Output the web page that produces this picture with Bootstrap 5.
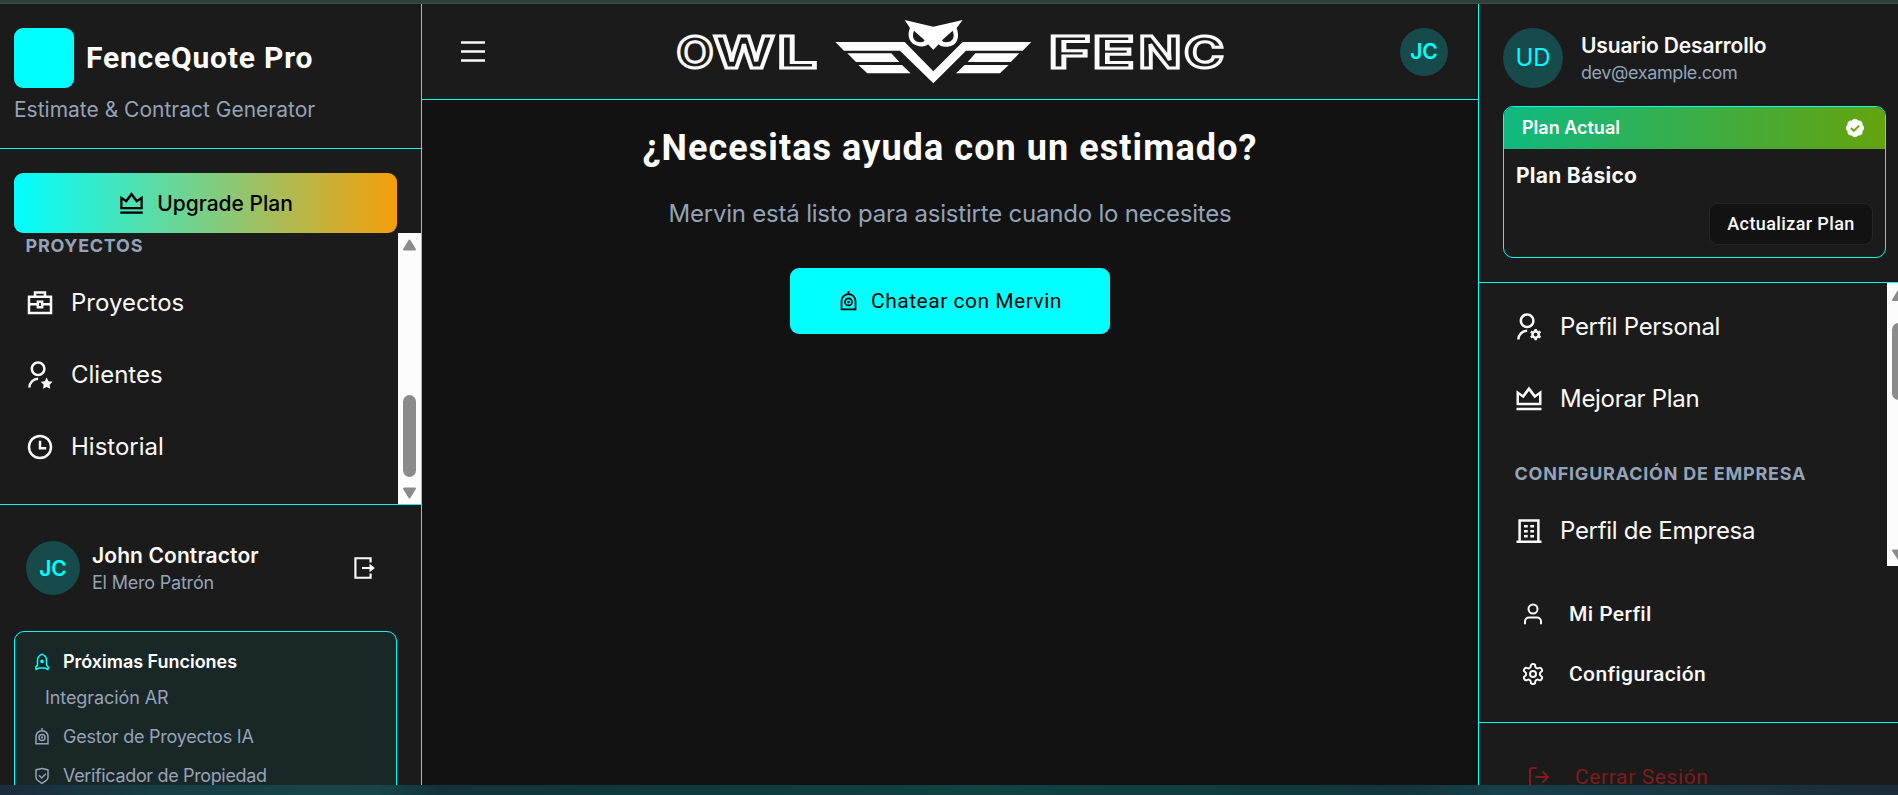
<!DOCTYPE html>
<html lang="es" data-bs-theme="dark">
<head>
<meta charset="utf-8">
<meta name="viewport" content="width=device-width, initial-scale=1">
<title>FenceQuote Pro</title>
<link href="https://cdn.jsdelivr.net/npm/bootstrap@5.3.0/dist/css/bootstrap.min.css" rel="stylesheet">
<style>
:root{--cyan:#00ffff;--panel:#1b1b1b;--muted:#94a3b8;--ink:#fafafa}
body{height:795px;overflow:hidden;background:#121212;color:var(--ink);font-family:Inter,"Noto Sans",sans-serif;font-size:24px;line-height:1}
.tech{font-family:Roboto,"Noto Sans",sans-serif}
svg{flex:none;display:block}
.strip-top{height:4px;background:#2c423b;border-bottom:1.5px solid #414b46}
.strip-bottom{height:10px;background:linear-gradient(90deg,#1a2c3e 0,#163e46 8%,#17454b 20%,#12333d 23%,#0f3e40 45%,#0f4342 52%,#12353f 74%,#17404a 79%,#1a2c3b 100%)}
.shell{height:781px}
.panel{background:var(--panel)}
.side-left{width:422px;border-right:1px solid var(--cyan)}
.side-right{width:420px;border-left:1px solid var(--cyan)}
.line-b{border-bottom:1px solid var(--cyan)}
.line-t{border-top:1px solid var(--cyan)}
.muted{color:var(--muted)}
.medium{font-weight:500}
.strongish{font-weight:600}
.t18{font-size:18px;line-height:24px}
.t21{font-size:21px;line-height:30px}
.avatar{background:#164a4b;color:var(--cyan);font-size:21px;font-weight:600;border-radius:50%}
.brand{height:145px;padding:24px 14px 0}
.brand-mark{width:60px;height:60px;border-radius:9px;background:var(--cyan)}
.brand-name{font-size:30px;letter-spacing:.8px}
.brand-sub{font-size:21px;line-height:28px;margin-top:8px;letter-spacing:0}
.upgrade{height:60px;margin:24px 24px 0 14px;border-radius:9px;background:linear-gradient(90deg,#00ffff,#f59e0b);color:#000;font-size:21px;gap:12px;letter-spacing:0}
.scroll-left{height:271px}
.scroll-right{height:283px;overflow:hidden}
.track{width:23px;background:#fcfcfc;flex:none}
.track-cut{width:11px;overflow:hidden}
.group-title{font-size:18px;font-weight:700;line-height:25px;letter-spacing:.73px}
.item{height:60px;gap:16.5px;color:var(--ink);text-decoration:none}
.item-gap{margin-bottom:12px}
.soon{margin:36px 24px 0 14px;height:200px;border:1px solid var(--cyan);border-radius:10px;background:#1a2727;padding:17px 18px;font-size:18px;line-height:26px}
.soon .d-flex{gap:12px}
.topbar{height:96px;padding:0 30px 0 39px}
.help-title{font-size:36px;line-height:48px;letter-spacing:1.07px;margin:24px 0 24px}
.help-text{line-height:36px;letter-spacing:-.21px;margin:0 0 36px}
.chat{width:320px;height:66px;border-radius:9px;background:var(--cyan);color:#000;font-size:21px;gap:12px;letter-spacing:.5px}
.plan{margin:18px 12px 0 24px;height:152px;border:1px solid var(--cyan);border-radius:10px}
.plan-head{height:42px;padding:0 19px 0 18px;background:linear-gradient(90deg,#10b981,#65a30d);color:#fff;letter-spacing:0;border-radius:9px 9px 0 0}
.plan-btn{width:164px;height:42px;border:1px solid #272727;border-radius:9px;background:#121212;color:var(--ink);font-size:18px;letter-spacing:.39px;margin-top:11px}
.quick{height:60px;padding-left:42px;gap:24px;font-size:21px;font-weight:500;letter-spacing:.4px}
.leave{color:#801c1c;height:18px;margin-top:42px;padding-left:48px;gap:24px;font-size:21px;line-height:24px;letter-spacing:.62px}
</style>
</head>
<body class="d-flex flex-column">
<svg width="0" height="0" class="position-absolute" aria-hidden="true">
  <symbol id="crown" viewBox="0 0 24 24"><path d="M2 19h20v2H2zM2 5l5 3.500L12 2l5 6.500L22 5v12H2zm2 3.841V15h16V8.841l-3.580 2.506L12 5.600l-4.420 5.747z"/></symbol>
  <symbol id="person" viewBox="0 0 24 24"><path d="M12 14v2a6 6 0 0 0-6 6H4a8 8 0 0 1 8-8zm0-1c-3.315 0-6-2.685-6-6s2.685-6 6-6 6 2.685 6 6-2.685 6-6 6zm0-2c2.210 0 4-1.790 4-4s-1.790-4-4-4-4 1.790-4 4 1.790 4 4 4z" transform="translate(-1.500)"/></symbol>
  <symbol id="robot" viewBox="0 0 24 24"><g fill="none" stroke="currentColor" stroke-width="2"><path d="M12 0v4M4 21V11.500a8 8 0 0 1 16 0V21z"/><circle cx="12" cy="12.500" r="4"/></g><circle cx="12" cy="12.500" r="1.500"/></symbol>
</svg>
<div class="strip-top flex-shrink-0"></div>
<div class="shell d-flex overflow-hidden">

  <aside class="panel side-left flex-shrink-0">
    <div class="brand line-b">
      <div class="d-flex align-items-center" style="gap:12px">
        <div class="brand-mark"></div><h1 class="brand-name tech fw-bold m-0">FenceQuote Pro</h1>
      </div>
      <div class="brand-sub muted">Estimate &amp; Contract Generator</div>
    </div>
    <div class="upgrade medium d-flex align-items-center justify-content-center">
      <svg width="27" height="27" fill="currentColor"><use href="#crown"/></svg>Upgrade Plan
    </div>
    <div class="scroll-left d-flex">
      <nav class="flex-grow-1" style="padding-left:24.5px">
        <div class="group-title muted" style="padding-left:1px;margin-bottom:15px">PROYECTOS</div>
        <a class="item item-gap d-flex align-items-center">
          <svg width="30" height="30" viewBox="0 0 24 24" fill="none" stroke="currentColor" stroke-width="2"><path d="M3.200 7h17.600v13H3.200zM8 7V3.500h8V7M3 13h7m4 0h7M10.300 11h3.400v4.300h-3.400z"/></svg>Proyectos</a>
        <a class="item item-gap d-flex align-items-center">
          <svg width="30" height="30" viewBox="0 0 24 24" fill="currentColor"><use href="#person" width="24" height="24"/><path d="m17.300 21.500-2.939 1.545.561-3.272-2.377-2.318 3.286-.478L17.300 14l1.470 2.977 3.285.478-2.377 2.318.560 3.272z"/></svg>Clientes</a>
        <a class="item d-flex align-items-center">
          <svg width="30" height="30" viewBox="0 0 24 24" fill="none" stroke="currentColor" stroke-width="2"><circle cx="12" cy="12" r="8.800"/><path d="M12 7v6h5"/></svg>Historial</a>
      </nav>
      <div class="track">
        <svg width="23" height="271" fill="#8b8b8b"><path d="M11.500 7.500 17 16.500H6z" stroke="#8b8b8b" stroke-width="2" stroke-linejoin="round"/><rect x="5" y="162" width="13" height="82" rx="6.500"/><path d="M11.500 264.500 17 255.500H6z" stroke="#8b8b8b" stroke-width="2" stroke-linejoin="round"/></svg>
      </div>
    </div>
    <div class="line-t" style="padding-top:36px">
      <div class="d-flex align-items-center" style="padding:0 45px 0 26px;gap:12px">
        <div class="avatar d-flex align-items-center justify-content-center" style="width:54px;height:54px">JC</div>
        <div class="flex-grow-1">
          <div class="t21 strongish" style="letter-spacing:.1px">John Contractor</div>
          <div class="t18 muted" style="letter-spacing:-.2px">El Mero Patrón</div>
        </div>
        <svg width="26" height="26" viewBox="0 0 24 24" fill="currentColor"><path d="M4 2h16v5h-2V4H6v16h12v-3h2v5H4zm14 14v-3h-7v-2h7V8l5 4z"/></svg>
      </div>
      <div class="soon muted">
        <div class="strongish d-flex align-items-center text-white" style="letter-spacing:-.03px">
          <svg width="18" height="18" viewBox="0 0 24 24" fill="none" stroke="#00ffff" stroke-width="2"><path d="M6 16V9.500C6 6 8.500 3 12 1.500 15.500 3 18 6 18 9.500V16l2.500 3-.7 3-3.800-2H8l-3.800 2-.7-3z"/><circle cx="12" cy="11" r="1.500" fill="#00ffff"/></svg>Próximas Funciones</div>
        <div style="margin:10px 0 13px 12px;letter-spacing:-.09px">Integración AR</div>
        <div class="d-flex align-items-center" style="letter-spacing:-.23px;margin-bottom:13px"><svg width="18" height="18" fill="currentColor"><use href="#robot"/></svg>Gestor de Proyectos IA</div>
        <div class="d-flex align-items-center" style="letter-spacing:-.35px"><svg width="18" height="18" viewBox="0 0 24 24" fill="currentColor"><path d="M12 1l8.217 1.826a1 1 0 0 1 .783.976v9.987a6 6 0 0 1-2.672 4.992L12 23l-6.328-4.219A6 6 0 0 1 3 13.790V3.802a1 1 0 0 1 .783-.976L12 1zm0 2.049L5 4.604v9.185a4 4 0 0 0 1.781 3.328L12 20.597l5.219-3.480A4 4 0 0 0 19 13.790V4.604L12 3.050zm4.452 5.173l1.415 1.414L11.503 16 7.260 11.757l1.414-1.414 2.828 2.828 4.950-4.950z"/></svg>Verificador de Propiedad</div>
      </div>
    </div>
  </aside>

  <main class="flex-grow-1">
    <header class="panel topbar line-b d-flex align-items-center justify-content-between">
      <svg width="24" height="23" stroke="#fafafa" stroke-width="2.600"><path d="M0 2.500h24M0 11.500h24M0 20.500h24"/></svg>
      <svg width="560" height="77" viewBox="672 13 560 77" style="margin-left:18px" role="img" aria-label="Owl Fenc">
        <g font-family="Inter, sans-serif" font-weight="700" font-size="44" fill="#1b1b1b" stroke="#fafafa" stroke-width="3">
          <text x="676.500" y="67.500" textLength="37" lengthAdjust="spacingAndGlyphs">O</text>
          <text x="713.500" y="67.500" textLength="61" lengthAdjust="spacingAndGlyphs">W</text>
          <text x="777" y="67.500" textLength="40" lengthAdjust="spacingAndGlyphs">L</text>
          <text x="1048.500" y="67.500" textLength="42" lengthAdjust="spacingAndGlyphs">F</text>
          <text x="1092.500" y="67.500" textLength="42" lengthAdjust="spacingAndGlyphs">E</text>
          <text x="1138.500" y="67.500" textLength="43" lengthAdjust="spacingAndGlyphs">N</text>
          <text x="1184" y="67.500" textLength="40" lengthAdjust="spacingAndGlyphs">C</text>
        </g>
        <g transform="translate(826 10) scale(.3333)" fill="#fff" fill-rule="evenodd">
          <path d="M28 96H236L322 184L410 96H616L590 122H420L322 220L222 122H54ZM64 130H196L220 156H90ZM97 165H228L254 190H124ZM448 130H580L554 156H425ZM416 165H548L522 190H390Z"/>
          <path d="M236 30L322 50L410 30L392 54C402 80 395 108 365 110C352 112 342 108 338 103L322 119L306 103C300 110 285 112 270 106C246 96 244 72 252 54ZM264 62C256 82 264 96 284 97C292 97 294 94 296 91ZM380 62C388 82 380 96 360 97C352 97 350 94 348 91Z"/>
        </g>
      </svg>
      <div class="avatar d-flex align-items-center justify-content-center" style="width:48px;height:48px">JC</div>
    </header>
    <section class="d-flex flex-column align-items-center">
      <h2 class="help-title tech fw-bold">¿Necesitas ayuda con un estimado?</h2>
      <p class="help-text muted">Mervin está listo para asistirte cuando lo necesites</p>
      <button class="chat tech border-0 d-flex align-items-center justify-content-center"><svg width="21" height="21" fill="currentColor"><use href="#robot"/></svg>Chatear con Mervin</button>
    </section>
  </main>

  <aside class="panel side-right flex-shrink-0">
    <div class="line-b" style="height:279px;padding-top:24px">
      <div class="d-flex align-items-center ps-4" style="gap:18px">
        <div class="avatar fw-normal d-flex align-items-center justify-content-center" style="width:60px;height:60px;font-size:24px">UD</div>
        <div>
          <div class="t21 strongish" style="letter-spacing:-.15px">Usuario Desarrollo</div>
          <div class="t18 muted" style="letter-spacing:-.4px">dev@example.com</div>
        </div>
      </div>
      <div class="plan">
        <div class="plan-head t18 strongish d-flex align-items-center justify-content-between">Plan Actual
          <svg width="22" height="22" viewBox="0 0 24 24"><path fill="#fff" d="M3.850 8.620a4 4 0 0 1 4.780-4.770 4 4 0 0 1 6.740 0 4 4 0 0 1 4.780 4.780 4 4 0 0 1 0 6.740 4 4 0 0 1-4.770 4.780 4 4 0 0 1-6.750 0 4 4 0 0 1-4.780-4.770 4 4 0 0 1 0-6.760Z"/><path d="m7.500 12 3.200 3.200 5.800-5.800" fill="none" stroke="#62a413" stroke-width="2.200"/></svg>
        </div>
        <div style="padding:11px 12px 0">
          <div class="fw-bold" style="font-size:21px;line-height:32px;letter-spacing:.26px">Plan Básico</div>
          <button class="plan-btn tech medium d-block ms-auto p-0">Actualizar Plan</button>
        </div>
      </div>
    </div>
    <div class="scroll-right d-flex">
      <nav class="flex-grow-1" style="padding:14px 0 0 34.5px;letter-spacing:-.3px">
        <a class="item item-gap d-flex align-items-center">
          <svg width="30" height="30" viewBox="0 0 24 24" fill="currentColor"><use href="#person" width="24" height="24"/><path transform="translate(-.7)" d="M14.595 18.812a3.510 3.510 0 0 1 0-1.623l-.992-.573 1-1.732.992.573A3.496 3.496 0 0 1 17 14.645V13.500h2v1.145c.532.158 1.012.440 1.405.812l.992-.573 1 1.732-.992.573a3.510 3.510 0 0 1 0 1.622l.992.573-1 1.732-.992-.573a3.496 3.496 0 0 1-1.405.812V22.500h-2v-1.145a3.496 3.496 0 0 1-1.405-.812l-.992.573-1-1.732zM18 19.500a1.500 1.500 0 1 0 0-3 1.500 1.500 0 0 0 0 3z" fill-rule="evenodd"/></svg>Perfil Personal</a>
        <a class="item d-flex align-items-center"><svg width="30" height="30" fill="currentColor"><use href="#crown"/></svg>Mejorar Plan</a>
        <div class="group-title muted" style="margin:32px 0 15px;padding-left:1px;letter-spacing:.77px">CONFIGURACIÓN DE EMPRESA</div>
        <a class="item d-flex align-items-center">
          <svg width="30" height="30" viewBox="0 0 24 24" fill="none" stroke="currentColor" stroke-width="2"><path d="M2 20.500h20M4.500 20V3.500h15V20"/><path d="M8 8.200h3m2 0h3m-8 4h3m2 0h3m-8 4h3m2 0h3"/></svg>Perfil de Empresa</a>
      </nav>
      <div class="track track-cut">
        <svg width="23" height="283" fill="#8b8b8b"><path d="M11.500 8 17 17H6z" stroke="#8b8b8b" stroke-width="2" stroke-linejoin="round"/><rect x="5" y="40" width="13" height="77" rx="6.500"/><path d="M11.500 276 17 267.500H6z" stroke="#8b8b8b" stroke-width="2" stroke-linejoin="round"/></svg>
      </div>
    </div>
    <div class="line-b tech" style="height:157px;padding-top:18px">
      <div class="quick d-flex align-items-center"><svg width="24" height="24" viewBox="0 0 24 24" fill="none" stroke="currentColor" stroke-width="2" stroke-linecap="round"><path d="M20 21.500v-2a4 4 0 0 0-4-4H8a4 4 0 0 0-4 4v2"/><circle cx="12" cy="7" r="4.500"/></svg>Mi Perfil</div>
      <div class="quick d-flex align-items-center"><svg width="24" height="24" viewBox="0 0 24 24" fill="none" stroke="currentColor" stroke-width="2" stroke-linejoin="round"><path d="M12.220 2h-.440a2 2 0 0 0-2 2v.180a2 2 0 0 1-1 1.730l-.430.250a2 2 0 0 1-2 0l-.150-.080a2 2 0 0 0-2.730.730l-.220.380a2 2 0 0 0 .730 2.730l.150.100a2 2 0 0 1 1 1.720v.510a2 2 0 0 1-1 1.740l-.150.090a2 2 0 0 0-.730 2.730l.220.380a2 2 0 0 0 2.730.730l.150-.080a2 2 0 0 1 2 0l.430.250a2 2 0 0 1 1 1.730V20a2 2 0 0 0 2 2h.440a2 2 0 0 0 2-2v-.180a2 2 0 0 1 1-1.730l.430-.250a2 2 0 0 1 2 0l.150.080a2 2 0 0 0 2.730-.730l.220-.390a2 2 0 0 0-.730-2.730l-.150-.080a2 2 0 0 1-1-1.740v-.500a2 2 0 0 1 1-1.740l.150-.090a2 2 0 0 0 .730-2.730l-.220-.380a2 2 0 0 0-2.730-.730l-.150.080a2 2 0 0 1-2 0l-.430-.250a2 2 0 0 1-1-1.730V4a2 2 0 0 0-2-2z"/><circle cx="12" cy="12" r="3"/></svg>Configuración</div>
    </div>
    <div class="leave tech d-flex align-items-start">
      <svg width="24" height="24" viewBox="0 0 24 24" fill="none" stroke="currentColor" stroke-width="2" stroke-linecap="round" stroke-linejoin="round"><path d="M9 21H5a2 2 0 0 1-2-2V5a2 2 0 0 1 2-2h4M16 17l5-5-5-5M21 12H9"/></svg>Cerrar Sesión</div>
  </aside>
</div>
<div class="strip-bottom flex-shrink-0"></div>
<script src="https://cdn.jsdelivr.net/npm/bootstrap@5.3.0/dist/js/bootstrap.bundle.min.js"></script>
</body>
</html>
